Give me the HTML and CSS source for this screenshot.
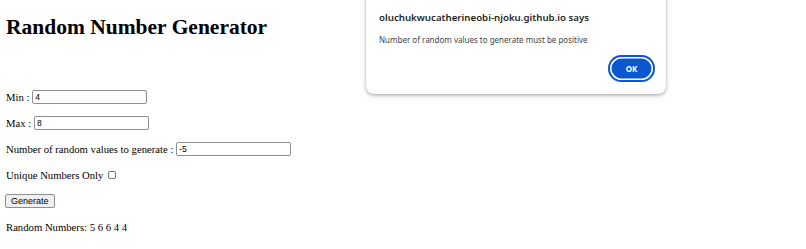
FILE: index.html
```html
<!DOCTYPE html>
<html>
<head>
<meta charset="utf-8">
<link rel="stylesheet" href="styles.css">
</head>
<body>
<h1 class="title">Random Number Generator</h1>
<div class="form">
  <div class="row">Min : <input class="field" type="text" value="4"></div>
  <div class="row">Max : <input class="field" type="text" value="8"></div>
  <div class="row">Number of random values to generate : <input class="field" type="text" value="-5"></div>
  <div class="row">Unique Numbers Only <span class="check"></span></div>
  <div class="row"><button class="btn">Generate</button></div>
  <div class="row">Random Numbers: 5 6 6 4 4</div>
</div>
<div class="dialog">
  <div class="dlg-title">oluchukwucatherineobi-njoku.github.io says</div>
  <div class="dlg-msg">Number of random values to generate must be positive</div>
  <div class="dlg-actions"><button class="ok">OK</button></div>
</div>
</body>
</html>
```
FILE: styles.css
```css
html, body { margin: 0; padding: 0; background: #fff; }
body {
  font-family: "Liberation Serif", "Times New Roman", serif;
  font-size: 10.7px;
  color: #000;
  padding: 0 6px;
  position: relative;
  width: 794px;
  height: 249px;
  overflow: hidden;
}
.title {
  font-size: 21.5px;
  font-weight: bold;
  margin: 0;
  padding-top: 14px;
  line-height: 26px;
}
.form {
  display: flex;
  flex-direction: column;
  margin-top: 50px;
  gap: 12px;
}
.row {
  height: 14px;
  display: flex;
  align-items: center;
  white-space: pre;
}
.field {
  box-sizing: border-box;
  width: 115px;
  height: 14px;
  border: 1px solid #8f8f8f;
  border-radius: 2px;
  font-family: "Liberation Sans", Arial, sans-serif;
  font-size: 8.5px;
  padding: 0 2px;
  margin: 0;
  color: #000;
}
.check {
  display: inline-block;
  box-sizing: border-box;
  width: 8px;
  height: 8px;
  border: 1px solid #767676;
  border-radius: 2px;
  margin-left: 2px;
}
.btn {
  box-sizing: border-box;
  height: 14px;
  padding: 0 5px;
  margin-left: -1px;
  font-family: "Liberation Sans", Arial, sans-serif;
  font-size: 9px;
  background: #efefef;
  border: 1px solid #8f8f8f;
  border-radius: 2px;
  color: #000;
  line-height: 12px;
}
.dialog {
  position: absolute;
  left: 366px;
  top: -8px;
  width: 300px;
  height: 102px;
  box-sizing: border-box;
  background: #fff;
  border-radius: 8px;
  box-shadow: 0 1px 3px rgba(0,0,0,0.28), 0 2px 6px rgba(0,0,0,0.12);
  padding: 19px 11px 0 13px;
  font-family: "Noto Sans", "Open Sans", sans-serif;
}
.dlg-title {
  font-size: 9.7px;
  font-weight: 600;
  color: #1f1f1f;
  line-height: 14px;
}
.dlg-msg {
  font-size: 8px;
  color: #444;
  margin-top: 9px;
  line-height: 11px;
}
.dlg-actions {
  display: flex;
  justify-content: flex-end;
  margin-top: 10px;
}
.ok {
  box-sizing: border-box;
  width: 47px;
  height: 27px;
  border-radius: 14px;
  background: #0b57d0;
  border: none;
  box-shadow: inset 0 0 0 2px #0b57d0, inset 0 0 0 3.5px #fff;
  color: #fff;
  font-family: "Noto Sans", "Open Sans", sans-serif;
  font-weight: bold;
  font-size: 8px;
  padding: 0;
}
```
